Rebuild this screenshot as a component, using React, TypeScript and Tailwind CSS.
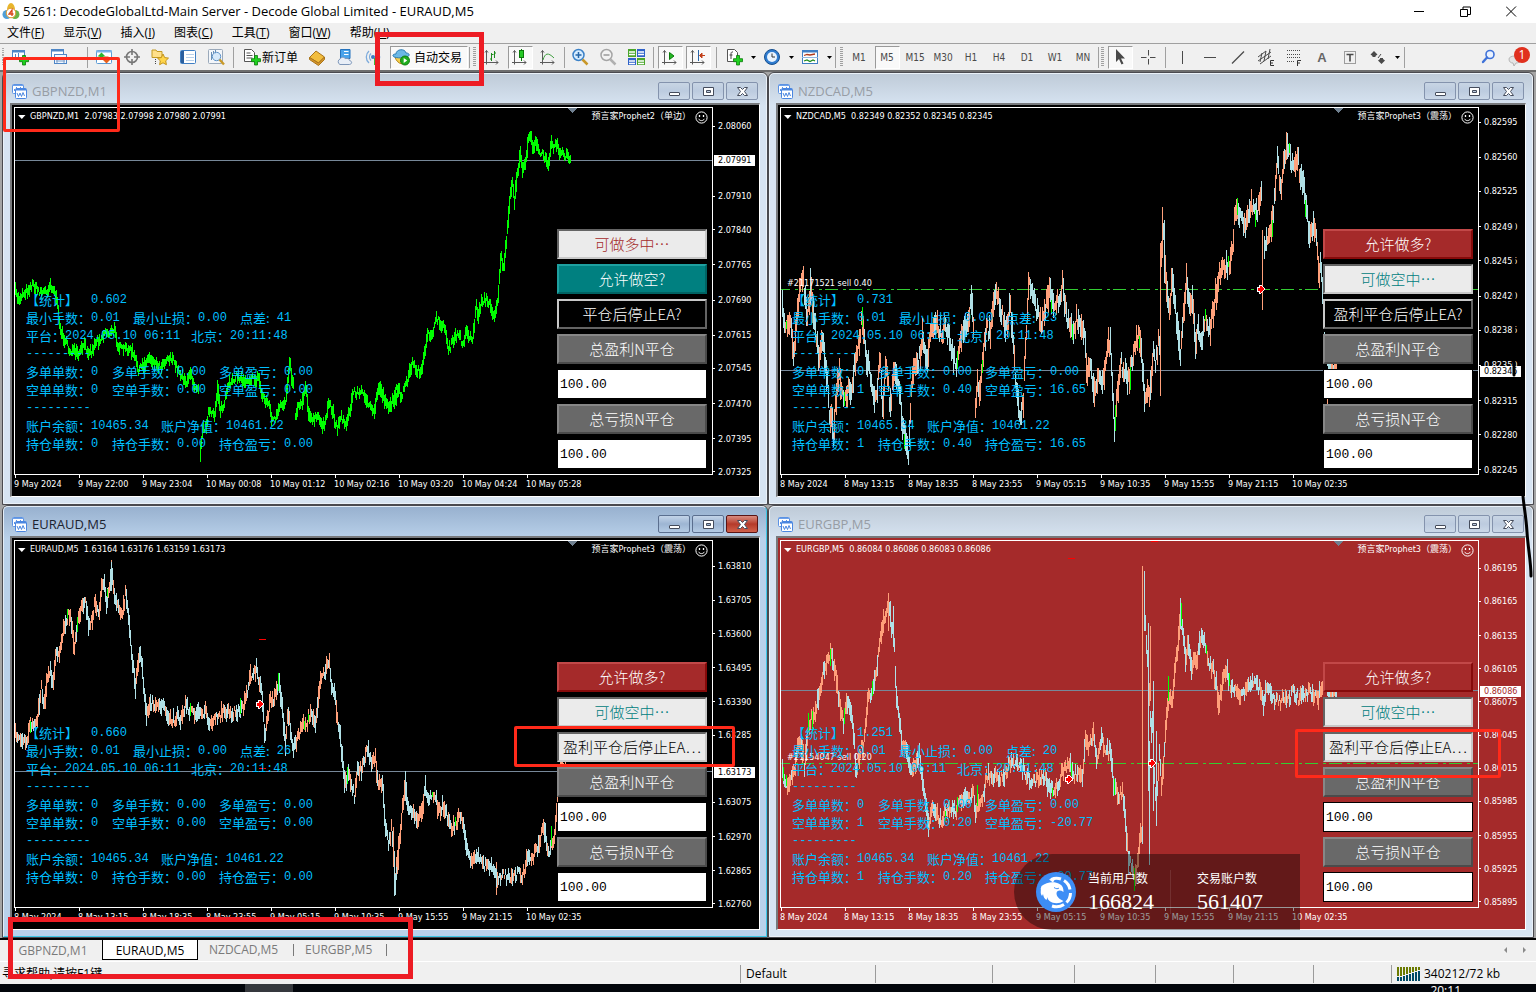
import React from "react";

const UI = "font-['Open_Sans','Noto_Sans_CJK_SC',sans-serif]";
const CHART = "font-['DejaVu_Sans_Condensed','DejaVu_Sans','Noto_Sans_CJK_SC',sans-serif]";
const CJK = "font-['Noto_Sans_CJK_SC',sans-serif]";
const MONO = "font-['Liberation_Mono','Noto_Sans_CJK_SC',monospace]";

/* ---------- price series ---------- */

type Segment = { dx: number; dy: number; points: string };
type Spike = [number, number, number, number];
type Tag = [string, number];
type Btn = { text: string; kind: "red" | "teal" | "black" | "grey" | "lightRed" | "lightTeal" | "lightBlack" };

type ChartData = {
  symbol: string;
  active?: boolean;
  quotes: string;
  expert: string;
  background: "black" | "red";
  colours: "lime" | "dual";
  spread: number;
  segments: Segment[];
  spikes?: Spike[];
  prices: Tag[];
  current: Tag;
  times: string[];
  order?: { text: string; y: number };
  arrows?: [number, number][];
  marks?: [number, number][];
  stats: { ratio: string; spread: string; count: string; lots: string; profit: string };
  buttons: Btn[];
};

const GBPNZD: Segment[] = [
  { dx: -15, dy: 162, points: "45,66 55,90 65,72 80,62 98,42 112,60 126,66 140,64 150,42 160,60 168,90 175,130 182,190 195,210 205,240 220,245 235,258 250,225 262,240 275,246 285,215 300,205 315,185 330,190 345,180 352,225 365,240 380,235 395,246 405,270 415,300 430,285 447,262 465,280 480,288 497,268 512,262 525,285 540,310 552,325 560,345 572,300 580,345 596,350" },
  { dx: -15, dy: 162, points: "600,540 606,480 616,470 625,425 642,440 652,350 660,420 670,410 680,365 692,330 710,320 730,330 748,325 765,330 775,320 783,370 795,390 805,400 815,450 825,450 840,410 855,395 862,330 867,270 874,320 880,350" },
  { dx: -15, dy: 162, points: "883,440 895,405 905,395 916,345 924,420 935,455 950,440 965,465 978,450 986,395 998,430 1010,475 1020,440 1035,460 1048,430 1058,365 1075,370 1090,365 1105,410 1120,430 1135,350 1150,380 1165,410 1180,395 1198,360" },
  { dx: 365, dy: -8, points: "0,865 12,900 28,925 47,870 62,890 78,850 95,790 112,815 125,810 135,750 142,705 155,700 168,660 182,670 195,690 205,750 218,725 232,700 248,730 258,695 276,720 288,620 295,650 303,600 318,600 330,620 342,645 352,600 362,470 370,500 378,430 388,300 397,250 402,300 410,230 420,160 428,215 436,190 443,110 450,105 458,140 466,130 478,160 490,165 498,190 506,180 513,115 520,140 530,130 540,160 552,165 560,165 570,185" },
];

const NZDCAD: Segment[] = [
  { dx: -13, dy: -8, points: "40,620 50,670 66,650 75,760 85,660 95,540 103,530 118,650 127,560 135,650 145,730 152,770 160,700 170,780 178,850 185,980 190,930 195,1000 205,880 212,800 220,880 228,900 240,860 250,880 260,780 270,730 283,650 295,780 305,820 318,890 328,850 335,780 343,930 352,780 365,920 380,800 392,850 400,960 410,1000 420,1070 430,860 440,800 455,770 462,700 475,780 485,720 500,670 515,700 530,680 545,720 555,780 568,790 580,700 595,680 603,640 607,570 612,640 616,720" },
  { dx: -13, dy: -8, points: "620,940 627,860 632,900 640,800 655,680 665,700 677,580 690,600 700,640 715,690 725,620 735,740 745,880 757,960 765,900 772,720 780,560 790,560 805,640 820,680 835,610 843,560 855,630 870,600 882,550 895,650 905,680 915,700 925,650 940,680 950,690 955,820 965,780 978,890 990,810 1003,860 1015,760 1025,720 1037,980 1050,860 1057,780 1065,810 1080,840 1090,790 1100,740 1112,700 1120,780 1130,910 1140,880 1146,880" },
  { dx: 369, dy: -8, points: "0,870 8,750 15,790 25,720 30,790 33,480 38,380 45,500 50,570 58,620 65,530 72,600 80,680 90,760 100,640 108,540 115,600 125,600 135,720 145,690 155,720 165,660 178,690 190,620 200,560 210,510 220,500 235,500 248,440 253,350 262,330 275,350 285,380 295,340 303,310 315,350 325,320 333,280" },
  { dx: 369, dy: -8, points: "340,430 345,440 352,420 360,400 370,320 380,170 390,270 400,200 410,130 420,170 430,220 440,160 450,230 460,260 470,330 478,430 487,370 495,380 505,520 512,500 518,600 524,760 540,800 560,800" },
];

const EURAUD: Segment[] = [
  { dx: -15, dy: -36, points: "45,690 55,690 70,700 78,710 88,660 98,650 108,660 115,600 123,550 132,600 140,530 150,500 158,530 165,450 178,440 188,380 200,330 212,340 222,430 235,330 245,300 255,290 265,360 275,340 285,290 295,320 303,260 311,220 318,290 325,250 333,190 340,270 352,290 362,340 375,270 385,330 392,420 398,490 405,540 412,480 418,440 425,480 430,560 438,640 450,590 462,600 475,590 490,610 502,640 515,650 530,630 540,650 555,600 570,620 585,630 600,620 615,620 627,670 640,640 655,640 670,610 690,630 705,620 720,620 730,610 740,560 750,510 760,510 767,490 780,540 788,600 793,700 800,650 810,590 820,590 828,560 836,530 845,600 855,730 862,620 870,670 880,730 890,700 905,660 918,660 930,620 945,650 955,560 962,510 975,500 987,460 993,540 1003,570 1012,650 1022,720 1033,850 1042,800 1050,830 1062,870 1070,800 1085,790 1100,730 1115,780 1125,760 1133,850 1145,830 1155,960 1165,1020 1173,970 1185,1130 1195,1050" },
  { dx: 375, dy: -36, points: "8,960 14,1130 20,1050 30,990 37,900 45,840 55,920 65,920 80,940 92,930 105,850 115,880 125,880 135,870 145,920 160,900 170,930 182,970 195,960 207,930 220,970 232,1040 245,1070 262,1050 275,1080 290,1080 305,1090 320,1120 330,1110 345,1110 357,1125 370,1110 385,1105 397,1115 410,1060 425,1060 440,1030 450,1000 460,960 470,1030 480,1040 490,1000 497,940 502,860 510,790 525,780" },
];

const EURGBP: Segment[] = [
  { dx: -13, dy: -36, points: "40,800 55,835 70,810 80,780 90,710 98,700 108,780 118,680 128,640 140,640 150,570 165,500 178,460 190,440 203,520 215,600 225,660 235,580 248,620 257,700 263,800 275,740 285,720 297,590 310,560 322,500 333,430 345,340 352,330 362,290 370,370 378,420 383,560 390,610 400,720 412,720 422,780 430,810 442,780 452,740 462,820 475,910 482,970 492,910 505,930 515,950 530,920 547,910 560,920 575,890 590,880 605,870 615,870 622,940 632,890 645,880 655,810 670,810 690,820 710,810 725,780 740,770 755,780 770,800 785,830 800,830 815,825 830,820 845,850 855,865 868,840 880,800 895,780 905,780 915,810 930,800 943,810 950,690 960,720 975,690 985,760 1000,700 1010,740 1025,740 1035,830 1050,880 1062,850 1070,940 1080,1060 1090,1080 1100,1130 1110,1050 1118,980 1122,1000" },
  { dx: -13, dy: -36, points: "1127,300 1130,340 1136,470 1141,480 1145,640 1150,700" },
  { dx: 365, dy: -36, points: "18,640 22,780 30,930 38,740 46,850 55,720 62,600 70,560 78,590 85,500 95,420 103,320 110,390 118,470 125,410 135,480 145,470 155,450 165,380 175,420 185,470 200,490 210,540 218,600 228,530 240,490 250,540 265,560 280,570 300,550 320,530 340,550 352,600 360,550 372,560 385,580 400,590 415,580 430,580 440,560 455,580 470,570 490,560 505,570 515,580 525,550 532,530 550,560 570,570" },
];

const M5_TIMES = ["8 May 2024", "8 May 13:15", "8 May 18:35", "8 May 23:55", "9 May 05:15", "9 May 10:35", "9 May 15:55", "9 May 21:15", "10 May 02:35"];
const GREYS: Btn[] = [
  { text: "总盈利N平仓", kind: "grey" },
  { text: "总亏损N平仓", kind: "grey" },
];

const CHARTS: ChartData[] = [
  {
    symbol: "GBPNZD,M1", quotes: "2.07983 2.07998 2.07980 2.07991", expert: "预言家Prophet2（单边）",
    background: "black", colours: "lime", spread: 10, segments: GBPNZD,
    prices: [["2.08060", 19], ["2.07910", 89], ["2.07840", 122], ["2.07765", 157], ["2.07690", 192], ["2.07615", 227], ["2.07545", 260], ["2.07470", 295], ["2.07395", 330], ["2.07325", 363]],
    current: ["2.07991", 52],
    times: ["9 May 2024", "9 May 22:00", "9 May 23:04", "10 May 00:08", "10 May 01:12", "10 May 02:16", "10 May 03:20", "10 May 04:24", "10 May 05:28"],
    stats: { ratio: "0.602", spread: "41", count: "0", lots: "0.00", profit: "0.00" },
    buttons: [{ text: "可做多中…", kind: "lightRed" }, { text: "允许做空?", kind: "teal" }, { text: "平仓后停止EA?", kind: "black" }, ...GREYS],
  },
  {
    symbol: "NZDCAD,M5", quotes: "0.82349 0.82352 0.82345 0.82345", expert: "预言家Prophet3（震荡）",
    background: "black", colours: "dual", spread: 19, segments: NZDCAD,
    spikes: [[379, 135, 288, 0], [381, 99, 140, 0], [383, 112, 175, 1], [481, 122, 202, 0], [29, 160, 195, 1], [508, 35, 45, 2], [456, 90, 107, 2], [524, 92, 109, 2], [491, 112, 129, 2], [474, 102, 119, 2], [81, 199, 219, 2], [349, 259, 282, 2], [270, 192, 205, 2], [201, 252, 265, 2], [123, 326, 341, 2], [358, 228, 240, 2], [5, 213, 221, 2], [549, 257, 261, 0], [552, 257, 261, 1], [546, 291, 296, 0]],
    prices: [["0.82595", 15], ["0.82560", 50], ["0.82525", 84], ["0.82490", 119], ["0.82455", 153], ["0.82420", 188], ["0.82385", 222], ["0.82350", 257], ["0.82315", 292], ["0.82280", 326], ["0.82245", 361]],
    current: ["0.82345", 262], times: M5_TIMES,
    order: { text: "#21171521 sell 0.40", y: 181 }, arrows: [[479, 181]],
    stats: { ratio: "0.731", spread: "23", count: "1", lots: "0.40", profit: "16.65" },
    buttons: [{ text: "允许做多?", kind: "red" }, { text: "可做空中…", kind: "lightTeal" }, { text: "盈利平仓后停止EA?", kind: "black" }, ...GREYS],
  },
  {
    symbol: "EURAUD,M5", active: true, quotes: "1.63164 1.63176 1.63159 1.63173", expert: "预言家Prophet3（震荡）",
    background: "black", colours: "dual", spread: 13, segments: EURAUD,
    spikes: [[96, 21, 50, 1], [92, 48, 56, 2], [263, 132, 150, 2], [225, 157, 173, 2], [52, 68, 78, 2], [15, 180, 192, 2], [293, 173, 181, 2], [536, 285, 305, 2], [379, 310, 355, 1], [481, 321, 354, 0], [390, 230, 260, 1]],
    prices: [["1.63810", 26], ["1.63705", 60], ["1.63600", 93], ["1.63495", 127], ["1.63390", 161], ["1.63285", 194], ["1.63075", 261], ["1.62970", 295], ["1.62865", 329], ["1.62760", 362]],
    current: ["1.63173", 230], times: M5_TIMES,
    arrows: [[244, 163]], marks: [[244, 98], [244, 227]],
    stats: { ratio: "0.660", spread: "26", count: "0", lots: "0.00", profit: "0.00" },
    buttons: [{ text: "允许做多?", kind: "red" }, { text: "可做空中…", kind: "lightTeal" }, { text: "盈利平仓后停止EA…", kind: "lightBlack" }, ...GREYS],
  },
  {
    symbol: "EURGBP,M5", quotes: "0.86084 0.86086 0.86083 0.86086", expert: "预言家Prophet3（震荡）",
    background: "red", colours: "dual", spread: 14, segments: EURGBP,
    spikes: [[361, 25, 300, 0], [363, 30, 90, 1], [367, 82, 250, 1], [369, 85, 160, 0], [368, 200, 324, 1], [372, 140, 270, 1], [375, 190, 285, 1], [399, 57, 80, 1], [107, 52, 90, 0], [112, 65, 105, 1], [49, 108, 125, 2], [91, 140, 155, 2], [27, 172, 190, 2], [31, 170, 192, 2], [2, 226, 240, 2], [5, 234, 245, 2], [164, 270, 280, 2], [196, 244, 265, 2], [387, 135, 160, 2], [400, 62, 85, 2], [353, 327, 350, 2], [271, 247, 256, 2]],
    prices: [["0.86195", 28], ["0.86165", 61], ["0.86135", 95], ["0.86105", 128], ["0.86075", 161], ["0.86045", 194], ["0.86015", 227], ["0.85985", 260], ["0.85955", 294], ["0.85925", 327], ["0.85895", 360]],
    current: ["0.86086", 149], times: M5_TIMES,
    order: { text: "#21154047 sell 0.20", y: 222 }, arrows: [[370, 222], [287, 238]], marks: [[287, 17], [370, 0]],
    stats: { ratio: "1.251", spread: "20", count: "1", lots: "0.20", profit: "-20.77" },
    buttons: [{ text: "允许做多?", kind: "red" }, { text: "可做空中…", kind: "lightTeal" }, { text: "盈利平仓后停止EA…", kind: "lightBlack" }, ...GREYS],
  },
];

const PLOT_W = 697;
const PLOT_H = 366;

function buildPaths(chart: ChartData): string[] {
  const paths = ["", "", ""];
  let seed = 7;
  const rand = () => {
    seed = (seed * 16807) % 2147483647;
    return seed / 2147483647;
  };
  let last = 0;
  for (const seg of chart.segments) {
    const pts = seg.points.split(" ").map((p) => {
      const [x, y] = p.split(",").map(Number);
      return [x / 3 + seg.dx, y / 3 + seg.dy];
    });
    let i = 0;
    for (let x = Math.ceil(pts[0][0]); x <= pts[pts.length - 1][0]; x++) {
      while (i < pts.length - 2 && pts[i + 1][0] < x) i++;
      const [x0, y0] = pts[i];
      const [x1, y1] = pts[i + 1];
      const slope = (y1 - y0) / (x1 - x0);
      const mid = y0 + slope * (x - x0) + (rand() - 0.5) * chart.spread * 0.7;
      const half = (chart.spread * (0.3 + rand() * 0.95)) / 2 + Math.min(Math.abs(slope), 10) * 0.45;
      const top = Math.round(mid - half);
      const bottom = Math.round(mid + half);
      let c = 2;
      if (chart.colours === "dual") {
        const lean = rand() * 2 - 1 + Math.max(-0.6, Math.min(0.6, slope * 0.35)) + (last === 1 ? 0.15 : -0.15);
        c = lean > 0 ? 1 : 0;
        last = c;
        if (rand() < 0.008) c = 2;
      }
      paths[c] += `M${x}.5 ${top}V${bottom}`;
    }
  }
  for (const [x, a, b, c] of chart.spikes ?? []) paths[c] += `M${x}.5 ${a}V${b}`;
  return paths;
}

function Plot({ chart }: { chart: ChartData }) {
  const [up, down, lime] = buildPaths(chart);
  return (
    <svg className="absolute inset-0 h-full w-full" viewBox={`0 0 ${PLOT_W} ${PLOT_H}`} preserveAspectRatio="none" fill="none" shapeRendering="crispEdges" aria-hidden="true">
      <path d={`M0 ${chart.current[1]}.5H${PLOT_W}`} stroke="#778899" />
      {chart.order && <path d={`M0 ${chart.order.y}.5H${PLOT_W}`} stroke="#32cd32" strokeDasharray="13 5 3 3" strokeDashoffset="4" />}
      <path d={up} stroke="#ffa07a" />
      <path d={down} stroke="#b0e0e6" />
      <path d={lime} stroke="#00ff00" />
      {chart.marks?.map(([x, y]) => <path key={`${x}-${y}`} d={`M${x} ${y}.5h7`} stroke="#ff0000" />)}
      {chart.arrows?.map(([x, y]) => (
        <path key={`${x}-${y}`} d={`M${x - 3} ${y - 2}h2v-2h2l4 4l-4 4h-2v-2h-2z`} fill="#ff0000" stroke="#fff" />
      ))}
      <path d="M552 0h10l-5 5z" fill="#708090" />
    </svg>
  );
}

/* ---------- chart contents ---------- */

function Item({ label, value, w }: { label: string; value: string; w: string }) {
  return (
    <>
      <span className={`${CJK} text-[13px]`}>{label}</span>
      <span className={`${w} ${MONO} text-xs whitespace-pre`}>{value}</span>
    </>
  );
}

function Stats({ s }: { s: ChartData["stats"] }) {
  const row = "flex h-[18px] items-center whitespace-nowrap";
  return (
    <div className="absolute bottom-[21px] left-[11px] leading-[18px] text-[#00bfff]">
      <div className={row}>
        <span className={`${CJK} w-[65px] text-[13px]`}>【统计】</span>
        <span className={`${MONO} text-xs`}>{s.ratio}</span>
      </div>
      <div className={row}>
        <Item label="最小手数：" value="0.01" w="w-[42px]" />
        <Item label="最小止损：" value="0.00" w="w-[42px]" />
        <Item label="点差:" value={` ${s.spread}`} w="w-[42px]" />
      </div>
      <div className={row}>
        <Item label="平台：" value="2024.05.10 06:11" w="w-[126px]" />
        <Item label="北京：" value="20:11:48" w="w-[70px]" />
      </div>
      <div className={`${row} ${MONO} text-xs`}>---------</div>
      <div className={row}>
        <Item label="多单单数：" value="0" w="w-[21px]" />
        <Item label="多单手数：" value="0.00" w="w-[42px]" />
        <Item label="多单盈亏：" value="0.00" w="w-[42px]" />
      </div>
      <div className={row}>
        <Item label="空单单数：" value={s.count} w="w-[21px]" />
        <Item label="空单手数：" value={s.lots} w="w-[42px]" />
        <Item label="空单盈亏：" value={s.profit} w="w-[42px]" />
      </div>
      <div className={`${row} ${MONO} text-xs`}>---------</div>
      <div className={row}>
        <Item label="账户余额：" value="10465.34" w="w-[70px]" />
        <Item label="账户净值：" value="10461.22" w="w-[70px]" />
      </div>
      <div className={row}>
        <Item label="持仓单数：" value={s.count} w="w-[21px]" />
        <Item label="持仓手数：" value={s.lots} w="w-[42px]" />
        <Item label="持仓盈亏：" value={s.profit} w="w-[42px]" />
      </div>
    </div>
  );
}

const BTN_STYLE: Record<Btn["kind"], string> = {
  red: "border-t-[#c24848] border-l-[#c24848] border-r-[#860a0a] border-b-[#860a0a] bg-[#a52a2a] text-white",
  teal: "border-t-[#1ea0a0] border-l-[#1ea0a0] border-r-[#006464] border-b-[#006464] bg-[#008080] text-white",
  black: "border-t-[#c8c8c8] border-l-[#c8c8c8] border-r-[#646464] border-b-[#646464] bg-black text-white",
  grey: "border-t-[#878787] border-l-[#878787] border-r-[#4b4b4b] border-b-[#4b4b4b] bg-[#696969] text-white",
  lightRed: "border-t-[#646464] border-l-[#646464] border-r-[#c8c8c8] border-b-[#c8c8c8] bg-[#ebebeb] text-[#a52a2a]",
  lightTeal: "border-t-[#646464] border-l-[#646464] border-r-[#c8c8c8] border-b-[#c8c8c8] bg-[#ebebeb] text-[#008080]",
  lightBlack: "border-t-[#646464] border-l-[#646464] border-r-[#c8c8c8] border-b-[#c8c8c8] bg-[#ebebeb] text-black",
};

function Panel({ chart }: { chart: ChartData }) {
  const input = (label: string) => (
    <input aria-label={label} defaultValue="100.00" className={`h-[30px] w-full border border-black bg-white px-[2px] text-[13px] text-black ${MONO}`} />
  );
  return (
    <div className="absolute right-[5px] bottom-[5px] flex w-[150px] flex-col gap-[5px]">
      {chart.buttons.map((b) => (
        <React.Fragment key={b.text}>
          <button className={`h-[30px] border-2 text-[15px] leading-[26px] font-light whitespace-nowrap ${CJK} ${BTN_STYLE[b.kind]}`}>{b.text}</button>
          {b.kind === "grey" && input(b.text)}
        </React.Fragment>
      ))}
    </div>
  );
}

function Smiley() {
  return (
    <svg width="13" height="13" viewBox="0 0 13 13" fill="none" stroke="#fff" aria-hidden="true">
      <circle cx="6.5" cy="6.5" r="5.6" />
      <path d="M4.5 4v2M8.5 4v2" strokeWidth="1.3" />
      <path d="M3.5 7.8c1.4 2.4 4.6 2.4 6 0" />
    </svg>
  );
}

function ChartIcon() {
  return (
    <svg width="15" height="15" viewBox="0 0 15 15" fill="none" aria-hidden="true">
      <rect x="0.5" y="0.5" width="11" height="9" rx="1" fill="#fff" stroke="#5b92e4" />
      <path d="M1 1.5h10" stroke="#6ea0e8" />
      <path d="M2.500 7V5M4.500 5V3M6.500 4v2M8.500 3v2" stroke="#5b92e4" />
      <rect x="3.500" y="4.500" width="11" height="10" rx="1" fill="#fff" stroke="#4a86e0" />
      <path d="M4 5.500h10" stroke="#4a86e0" strokeWidth="2" />
      <path d="M5 9l1.500 3.500L8 9l1.500 3.500L11 8.500l1.500 3.500" stroke="#4a86e0" />
    </svg>
  );
}

function WinButton({ kind, active }: { kind: "min" | "max" | "close"; active?: boolean }) {
  const look =
    active && kind === "close"
      ? "border-[#5a1414] bg-linear-to-b from-[#d98b80] via-[#b53a2a] to-[#d0604a]"
      : active
        ? "border-[#5b6f8f] bg-linear-to-b from-[#c3d4e8] via-[#9db5d3] to-[#b4cbe4]"
        : "border-[#8493ad] bg-linear-to-b from-[#c8d5e4] via-[#bccbdf] to-[#cbd8e8]";
  return (
    <button aria-label={kind} className={`flex h-[18px] w-[32px] items-center justify-center rounded-xs border ${look}`}>
      <svg width="13" height="11" viewBox="0 0 13 11" fill="#fff" stroke="#454c5c" aria-hidden="true">
        {kind === "min" && <rect x="1.5" y="6.5" width="10" height="3" rx="0.5" />}
        {kind === "max" && <path fillRule="evenodd" d="M1.5 1.5h10v8h-10zM4.5 4.5h4v2h-4z" />}
        {kind === "close" && <path d="M1.5 1.5h3l2 2 2-2h3L8.500 5.500l3 4h-3l-2-2-2 2h-3l3-4z" />}
      </svg>
    </button>
  );
}

function ChartWindow({ chart }: { chart: ChartData }) {
  const bg = chart.background === "red" ? "bg-[#a52a2a]" : "bg-black";
  const frame = chart.active
    ? "bg-linear-to-b from-[#98b1cf] to-[#b9d1ea] to-[32px] border-t-[#e2ecf6] border-l-[#e2ecf6] border-r-[#3fc8e8] border-b-[#3fc8e8]"
    : "bg-linear-to-b from-[#bfcbd8] to-[#d7e4f2] to-[32px] border-[#eaf1f8]";
  return (
    <section className="flex min-h-0 min-w-0 flex-col rounded-t-md border border-[#4a4a4f]">
      <div className={`flex min-h-0 flex-1 flex-col rounded-t-[5px] border px-[6px] pb-[6px] ${frame}`}>
        <header className="flex h-[29px] shrink-0 items-center gap-[3px] pt-[5px] pl-[2px]">
          <ChartIcon />
          <h2 className={`flex-1 pl-[2px] text-[13px] leading-[18px] ${UI} ${chart.active ? "text-[#1c2430]" : "text-[#979da5]"}`}>{chart.symbol}</h2>
          <div className="flex gap-[2px] pr-[2px]">
            <WinButton kind="min" active={chart.active} />
            <WinButton kind="max" active={chart.active} />
            <WinButton kind="close" active={chart.active} />
          </div>
        </header>
        <div className={`grid min-h-0 flex-1 grid-cols-[1fr_46px] grid-rows-[1fr_21px] border-t-2 border-r border-b border-l-2 border-t-[#77797c] border-r-white border-b-white border-l-[#77797c] pt-[2px] pl-[2px] text-[9px] text-white ${bg} ${CHART}`}>
          <div className="relative border border-white">
            <Plot chart={chart} />
            {chart.order && (
              <span className="absolute left-[6px] leading-3 whitespace-nowrap" style={{ top: `calc(${(chart.order.y / PLOT_H) * 100}% - 12px)` }}>{chart.order.text}</span>
            )}
            <Stats s={chart.stats} />
            <div className="absolute inset-x-0 top-0 flex h-[18px] items-center pr-[4px] pl-[3px]">
              <svg width="8" height="5" viewBox="0 0 8 5" fill="#fff" aria-hidden="true"><path d="M0 0h7.500L3.800 4z" /></svg>
              <span className="ml-[4px] flex-1 whitespace-pre">{`${chart.symbol}  ${chart.quotes}`}</span>
              <span className="mr-[4px]">{chart.expert}</span>
              <Smiley />
            </div>
            <Panel chart={chart} />
          </div>
          <ul className="relative">
            {chart.prices.map(([text, y]) => (
              <li key={text} className="absolute left-0 flex h-3 items-center gap-[3px] leading-3" style={{ top: `calc(${(y / PLOT_H) * 100}% - 6px)` }}>
                <i className="h-px w-[2px] bg-white" />{text}
              </li>
            ))}
            <li className={`absolute left-[1px] h-[11px] w-[41px] bg-white pl-[4px] leading-[11px] ${chart.background === "red" ? "text-[#a52a2a]" : "text-black"}`} style={{ top: `calc(${(chart.current[1] / PLOT_H) * 100}% - 4px)` }}>{chart.current[0]}</li>
          </ul>
          <ol className="flex">
            {chart.times.map((t) => (
              <li key={t} className="w-[64px] whitespace-nowrap"><i className="ml-[1px] block h-[3px] w-px bg-white" /><span className="block leading-3">{t}</span></li>
            ))}
          </ol>
        </div>
      </div>
    </section>
  );
}

/* ---------- toolbar ---------- */

function Sep({ w = "w-[6px]" }: { w?: string }) {
  return <span className={`flex justify-center ${w}`}><i className="h-[21px] w-px bg-[#a0a0a0]" /></span>;
}
function Grip({ w = "w-[7px]" }: { w?: string }) {
  return (
    <svg className={w} height="20" viewBox="0 0 7 20" stroke="#a0a0a0" shapeRendering="crispEdges" aria-hidden="true">
      <path d="M2 .5h3M2 2.5h3M2 4.5h3M2 6.5h3M2 8.5h3M2 10.5h3M2 12.5h3M2 14.5h3M2 16.5h3M2 18.5h3" />
    </svg>
  );
}
function Caret({ w = "w-[10px]", tiny }: { w?: string; tiny?: boolean }) {
  return (
    <button aria-label="menu" className={`flex h-6 items-center justify-center ${w}`}>
      <svg width="5" height="3" viewBox="0 0 5 3" aria-hidden="true"><path d={tiny ? "M2 1h1v1h-1z" : "M0 0h5L2.5 3z"} /></svg>
    </button>
  );
}
const PRESSED = "border border-t-[#9a9a9a] border-l-[#9a9a9a] border-r-white border-b-white bg-[#f9f9f9]";

function Tool({ label, pressed, children }: { label: string; pressed?: boolean; children: React.ReactNode }) {
  return (
    <button aria-label={label} className="flex h-6 w-7 items-center justify-center">
      <span className={`flex h-[23px] w-[25px] items-center justify-center ${pressed ? PRESSED : ""}`}>
        <svg width="18" height="18" viewBox="0 0 18 18" fill="none" aria-hidden="true">{children}</svg>
      </span>
    </button>
  );
}

const plus = <path d="M11.500 7.500h3v3.200h3v3h-3v3.300h-3v-3.300h-3v-3h3z" fill="#1fd11f" stroke="#0a7a0a" strokeWidth="0.800" />;
const axes = (
  <>
    <path d="M3.500 2.500v14M1 14.500h14" stroke="#5a5a5a" />
    <path d="M2 4.500l1.500-2L5 4.500M13 12.500l2 2-2 2" stroke="#5a5a5a" />
  </>
);

function Toolbar() {
  return (
    <div role="toolbar" className="flex h-[29px] shrink-0 items-center overflow-hidden border-t border-b-2 border-t-[#a0a0a0] border-b-[#6d6d6d] bg-[#f0f0f0]">
      <Grip w="w-[6px]" />
      <Tool label="新图表"><rect x="1.500" y="2.500" width="12" height="9" fill="#fff" stroke="#4f86c6" /><path d="M1 3.500h13" stroke="#4f86c6" strokeWidth="2" /><path d="M4.500 6v4M7.500 5v4" stroke="#4f86c6" />{plus}</Tool>
      <Caret w="w-[11px]" tiny />
      <Tool label="配置"><rect x="1.500" y="1.500" width="12" height="9" fill="#fff" stroke="#4f86c6" /><path d="M1 2.500h13" stroke="#4f86c6" strokeWidth="2" /><rect x="4.500" y="6.500" width="12" height="9" fill="#eef5ff" stroke="#4f86c6" /><path d="M6 13h9M7 11v4M14 11v4" stroke="#7d9fc8" /></Tool>
      <Caret w="w-[11px]" tiny />
      <Sep />
      <Tool label="市场报价"><rect x="1.500" y="2.500" width="15" height="13" rx="1" fill="#fff" stroke="#5b9bd5" /><path d="M1 3.500h16" stroke="#7db2e6" strokeWidth="2" /><path d="M6.500 4.500l4 4H8.500v3h-4v-3h-2z" fill="#2db52d" /><path d="M11.500 15.500l-4-4h2v-3h4v3h2z" fill="#e8601c" /></Tool>
      <Tool label="数据窗口"><circle cx="9" cy="9" r="5.500" stroke="#777" strokeWidth="1.600" /><path d="M9 1v6M9 11v6M1 9h6M11 9h6" stroke="#777" strokeWidth="1.600" /></Tool>
      <Tool label="导航"><path d="M1 2h4l1 1.500h5v6H1z" fill="#ffe08a" stroke="#c29a25" /><path d="M4.500 11v6" stroke="#444" strokeDasharray="1 1" /><path d="M12 6l1.700 3.600 3.800.5-2.800 2.700.7 3.900-3.400-1.900-3.400 1.900.7-3.900L6.500 10.100l3.800-.5z" fill="#ffd54a" stroke="#c2931b" /></Tool>
      <Tool label="终端"><rect x="1.500" y="2.500" width="15" height="13" rx="1" fill="#fff" stroke="#3f7fc4" /><path d="M3.500 3v12" stroke="#2b5f9e" strokeWidth="3" /><path d="M7 6.500h8M7 9.500h8M7 12.500h8" stroke="#b8d0ea" /></Tool>
      <Tool label="策略测试"><rect x="1.500" y="1.500" width="14" height="14" rx="1" fill="#f3f6fa" stroke="#9aa9ba" /><path d="M4.500 4v8M6.500 3v3M8.500 2v4" stroke="#6b8fb5" /><circle cx="9.500" cy="8.500" r="4.200" fill="#cfe6fa" fillOpacity="0.8" stroke="#5f93c9" /><path d="M12.500 11.500l4.500 5" stroke="#c99a2a" strokeWidth="2.400" /></Tool>
      <Sep />
      <button className="flex h-6 w-[67px] items-center pl-[7px]">
        <svg width="18" height="18" viewBox="0 0 18 18" fill="none" aria-hidden="true"><path d="M1.500 1.500h7l3 3v9h-10z" fill="#fff" stroke="#555" /><path d="M3.500 5h4M3.500 7.500h6M3.500 10h6" stroke="#555" />{plus}</svg>
        <span className={`pl-[1px] text-xs whitespace-nowrap ${CJK}`}>新订单</span>
      </button>
      <Tool label="MetaEditor"><path d="M1.500 9.500L8 3l8.500 6-6 6z" fill="#f2bd3e" stroke="#a9741a" /><path d="M1.500 9.500v2l9 6 6-6V9l-6 6z" fill="#d7962a" stroke="#a9741a" /></Tool>
      <Tool label="市场"><path d="M4.500 1.500h9.500v9H4.500z" fill="#4aa3ea" stroke="#2573bd" /><path d="M8 3.500h4.500M8 6.500h4.500" stroke="#fff" /><path d="M4 16.500a3 3 0 010-5.500c1-2 4-2.300 5.300-.4 2.400-.8 4.300.6 4.400 2 2.700.6 2.500 3.600-.4 3.900z" fill="#e8eef7" stroke="#7c95b8" /></Tool>
      <Tool label="信号"><path d="M5 15a8 8 0 010-12M7 12.500a5 5 0 010-7M13 3a8 8 0 010 12M11 5.500a5 5 0 010 7" stroke="#7dabdc" strokeWidth="1.300" /><circle cx="9" cy="9" r="2" fill="#3a7bc2" /><path d="M10 10h3v7h-3z" fill="#3eb53e" /></Tool>
      <button aria-pressed="true" className={`ml-[3px] flex h-[23px] w-[78px] items-center pl-[1px] ${PRESSED}`}>
        <svg width="20" height="18" viewBox="0 0 20 18" fill="none" aria-hidden="true"><path d="M3 9c1 4 4 6.500 7 7l5-5V8z" fill="#f4cf4d" stroke="#b3861d" /><path d="M4 6c0-5 9-6 10-1 4 0 4 3 1 4-5 1.500-13 1-14-1-.5-1.500 1-2 3-2z" fill="#6bb8e6" stroke="#2f7fb4" /><circle cx="13" cy="12.500" r="4.500" fill="#1fae1f" stroke="#0f7f0f" /><path d="M11.700 10l3.500 2.500-3.500 2.500z" fill="#fff" /></svg>
        <span className={`pl-[2px] text-xs whitespace-nowrap ${CJK}`}>自动交易</span>
      </button>
      <Sep w="w-[3px]" />
      <Grip />
      <Tool label="柱状图">{axes}<path d="M8.500 5v8M7 11h1.500M8.500 6.500h2M11.500 3v7M11.500 5H13" stroke="#1e8c1e" /></Tool>
      <Tool label="阴阳烛" pressed>{axes}<path d="M10.500 1v12" stroke="#0a7a0a" /><rect x="8.500" y="2.500" width="4" height="7" fill="#25c825" stroke="#0a7a0a" /></Tool>
      <Tool label="折线图">{axes}<path d="M4 12c2-7 5-8 11-2" stroke="#3f9e3f" /></Tool>
      <Sep w="w-[4px]" />
      <Tool label="放大"><circle cx="7.500" cy="7" r="5.500" fill="#d6ecff" stroke="#3c82c8" strokeWidth="1.500" /><path d="M4.500 7h6M7.500 4v6" stroke="#2566a8" strokeWidth="1.500" /><path d="M11.500 11.500l5 5" stroke="#c9982a" strokeWidth="2.500" /></Tool>
      <Tool label="缩小"><circle cx="7.500" cy="7" r="5.500" fill="#f2f2f2" stroke="#a5a5a5" strokeWidth="1.500" /><path d="M4.500 7h6" stroke="#999" strokeWidth="1.500" /><path d="M11.500 11.500l5 5" stroke="#b0b0b0" strokeWidth="2.500" /></Tool>
      <Tool label="平铺"><path d="M1 1h8v8H1zM10 10h8v7h-8z" fill="#4aa52a" /><path d="M10 1h8v8h-8zM1 10h8v7H1z" fill="#2f62c9" /><path d="M2 4h6M11 4h6M2 6.500h6M11 6.500h6M2 13h6M11 13h6M2 15.500h6M11 15.500h6" stroke="#fff" strokeWidth="1.300" /></Tool>
      <Sep />
      <Tool label="自动滚动" pressed>{axes}<path d="M8.500 4.500l4.500 3.500-4.500 3.500z" fill="#25b825" stroke="#0a7a0a" /></Tool>
      <Tool label="图表平移" pressed>{axes}<path d="M9.500 2v11" stroke="#2a66a8" /><path d="M16 7.500h-4M13 5l-2.500 2.500L13 10z" stroke="#c2401a" fill="#c2401a" /></Tool>
      <Sep w="w-[8px]" />
      <Tool label="指标"><path d="M2.500 1.500h7l3 3v9h-10z" fill="#fff" stroke="#555" /><path d="M8 4c-2-.5-2 1-2 3v4M4.500 7h3" stroke="#444" />{plus}</Tool>
      <Caret />
      <Tool label="周期"><circle cx="9" cy="9" r="7.500" fill="#2f7cd0" stroke="#17508f" /><circle cx="9" cy="9" r="5" fill="#e9f4ff" /><path d="M9 5.500V9h3" stroke="#333" /></Tool>
      <Caret />
      <Tool label="模板"><rect x="1.500" y="2.500" width="15" height="13" fill="#fff" stroke="#3f7fc4" /><path d="M1 3.500h16" stroke="#3f7fc4" strokeWidth="2" /><path d="M1 9.500h16" stroke="#8fb8e0" /><path d="M3 7.500l3-1 3 .5 5-1" stroke="#b03a1a" strokeWidth="1.300" /><path d="M3 13l3-1 3 1.500 3-1.500 2 1" stroke="#1e8c1e" strokeWidth="1.300" /></Tool>
      <Caret />
      <Sep w="w-[3px]" />
      <Grip w="w-[8px]" />
      {["M1", "M5", "M15", "M30", "H1", "H4", "D1", "W1", "MN"].map((t) => (
        <button key={t} className={`flex h-6 w-7 items-center justify-center text-[10px] text-[#4a4a4a] ${CHART}`}>
          <span className={`flex h-[23px] w-[25px] items-center justify-center ${t === "M5" ? PRESSED : ""}`}>{t}</span>
        </button>
      ))}
      <Sep w="w-[2px]" />
      <Grip />
      <Tool label="光标" pressed><path d="M5 1v13l3-3 2.500 5.500 2-1L10 10.500h4z" fill="#4a4a4a" /></Tool>
      <Tool label="十字准线"><path d="M9.500 2v5.500M9.500 11v5.500M2 9.500h5.500M11 9.500h5.500" stroke="#4a4a4a" /></Tool>
      <Sep />
      <Tool label="垂直线"><path d="M9.500 3v13" stroke="#4a4a4a" /></Tool>
      <Tool label="水平线"><path d="M3 9.500h12" stroke="#4a4a4a" /></Tool>
      <Tool label="趋势线"><path d="M3 15.500L15 3.500" stroke="#4a4a4a" strokeWidth="1.200" /></Tool>
      <Tool label="通道"><path d="M1 13L14 4M1 9l8-6M3 16l11-8M5 5l-2 9M9 3L7 13M13 1l-2 10" stroke="#4a4a4a" /><path d="M17 12.500h-3.500v5H17M13.500 15H16" stroke="#333" /></Tool>
      <Tool label="斐波纳契"><path d="M2 2.500h13M2 6.500h13M2 9.500h13M2 13.500h8" stroke="#4a4a4a" strokeDasharray="1 1" /><path d="M16 12.500h-3.500V18M12.500 15H15" stroke="#333" /></Tool>
      <button aria-label="文字" className="flex h-6 w-7 items-center justify-center pt-[2px] font-['Liberation_Sans',sans-serif] text-[13px] font-bold text-[#666]">A</button>
      <Tool label="文字标签"><rect x="3.500" y="3.500" width="11" height="12" stroke="#4a4a4a" strokeDasharray="1 1" /><path d="M5.500 6.500h7M9 6.500v7" stroke="#4a4a4a" strokeWidth="1.600" /></Tool>
      <Tool label="箭头"><path d="M5 3l3.500 3.500L6.500 8v1h-3V8L1.500 6.500zM12.500 16L9 12.500 11 11v-1h3v1l2 1.500z" fill="#4a4a4a" /><path d="M9 10l3-4" stroke="#4a4a4a" /></Tool>
      <Caret />
      <Sep w="w-[4px]" />
      <div className="ml-auto flex pr-[5px]">
        <Tool label="搜索"><circle cx="10" cy="6.500" r="4" fill="#eaf2ff" stroke="#3f72d8" strokeWidth="1.600" /><path d="M7 9.500L3 14" stroke="#3f72d8" strokeWidth="2.400" strokeLinecap="round" /></Tool>
        <button aria-label="通知" className="relative flex h-6 w-7 items-center justify-center">
          <svg width="18" height="18" viewBox="0 0 18 18" aria-hidden="true"><path d="M1 11c0-4 12-4 12 0 0 3-3 4-5 4l-2 3-1-3c-2 0-4-1-4-4z" fill="#e4e4e4" stroke="#b5b5b5" /></svg>
          <span className={`absolute top-[2px] right-[1px] flex h-4 w-4 items-center justify-center rounded-full bg-[#e0301e] text-xs text-white ${UI}`}>1</span>
        </button>
      </div>
    </div>
  );
}

/* ---------- shell ---------- */

function TitleBar() {
  return (
    <header className="flex h-[23px] shrink-0 items-center bg-white pl-[2px]">
      <svg width="18" height="18" viewBox="0 0 18 18" fill="none" aria-hidden="true">
        <circle cx="5" cy="11.500" r="4.500" fill="#4f9fd8" /><circle cx="13" cy="11.500" r="4.500" fill="#67b346" /><path d="M9 0c2 0 4 3 4 7H5c0-4 2-7 4-7z" fill="#e8b52c" />
        <circle cx="9" cy="10" r="4.800" fill="#fff" stroke="#e09a2a" /><path d="M10 13V7l-3 4h4.500" stroke="#d9481c" strokeWidth="1.300" />
      </svg>
      <h1 className={`flex-1 pl-[3px] text-[13px] text-black ${UI}`}>5261: DecodeGlobalLtd-Main Server - Decode Global Limited - EURAUD,M5</h1>
      <div className="flex pr-[2px]">
        {["M0 5.500h10", "M0.500 3.500h7v7h-7zM3 3V1h7.500v7.500H8", "M0 0.500l10 10M10 0.500l-10 10"].map((d, i) => (
          <button key={d} aria-label={["最小化", "还原", "关闭"][i]} className="flex h-[22px] w-[46px] items-center justify-center">
            <svg width="11" height="11" viewBox="0 0 11 11" fill="none" stroke="#000" aria-hidden="true"><path d={d} /></svg>
          </button>
        ))}
      </div>
    </header>
  );
}

function MenuBar() {
  const items = [["文件", "F"], ["显示", "V"], ["插入", "I"], ["图表", "C"], ["工具", "T"], ["窗口", "W"], ["帮助", "H"]];
  return (
    <nav className="flex h-5 shrink-0 items-center gap-[19px] bg-[#f0f0f0] pl-[7px]">
      {items.map(([t, k]) => (
        <button key={k} className={`text-xs leading-5 font-normal whitespace-nowrap text-black ${UI}`}>{t}(<u>{k}</u>)</button>
      ))}
    </nav>
  );
}

function Tabs() {
  return (
    <div role="tablist" className={`flex h-6 shrink-0 items-start border-t-2 border-b border-t-black border-b-white bg-[#f0f0f0] pl-[6px] text-[12px] text-[#7a7a7a] ${UI}`}>
      <button role="tab" className="h-[20px] w-[96px] pr-[2px] leading-[22px]">GBPNZD,M1</button>
      <button role="tab" aria-selected="true" className="h-[20px] w-[96px] border-x border-b border-black bg-white leading-[21px] text-black">EURAUD,M5</button>
      <button role="tab" className="flex h-[20px] w-[96px] items-center justify-between leading-[22px]"><span className="pl-[11px]">NZDCAD,M5</span><i className="h-3 w-px bg-[#7a7a7a]" /></button>
      <button role="tab" className="flex h-[20px] w-[93px] items-center justify-between leading-[22px]"><span className="pl-[11px]">EURGBP,M5</span><i className="h-3 w-px bg-[#7a7a7a]" /></button>
      <svg className="mt-[6px] mr-[9px] ml-auto" width="24" height="8" viewBox="0 0 24 8" fill="#8a8a8a" aria-hidden="true"><path d="M4 1v6L1 4zM20 1v6l3-3z" /></svg>
    </div>
  );
}

function StatusBar() {
  const cell = "flex h-[18px] items-center border-l border-[#9b9b9b]";
  return (
    <footer className={`flex h-[22px] shrink-0 items-center bg-[#f0f0f0] pt-px text-[12px] text-black ${UI}`}>
      <span className="min-w-0 flex-1 pl-[2px] whitespace-nowrap">寻求帮助,请按F1键</span>
      <span className={`${cell} w-[135px] pl-[5px]`}>Default</span>
      <span className={`${cell} w-[117px]`} />
      <span className={`${cell} w-[82px]`} />
      <span className={`${cell} w-[81px]`} />
      <span className={`${cell} w-[78px]`} />
      <span className={`${cell} w-[80px]`} />
      <span className={`${cell} w-[78px]`} />
      <span className={`${cell} w-[145px] gap-[4px] pl-[5px]`}>
        <svg width="23" height="14" viewBox="0 0 23 14" shapeRendering="crispEdges" aria-hidden="true">
          {[9, 9, 8, 7, 6, 5, 4, 3].map((h, i) => (
            <g key={i}><rect x={i * 3} y="0" width="2" height={h} fill="#6b7a00" /><rect x={i * 3} y={h + 1} width="2" height={13 - h} fill="#004a66" /></g>
          ))}
        </svg>
        340212/72 kb
      </span>
    </footer>
  );
}

function Widget() {
  return (
    <aside className={`absolute right-[236px] bottom-[62px] flex h-[76px] w-[286px] items-center rounded-l-full bg-black/40 text-white ${CJK}`}>
      <svg className="ml-[22px]" width="40" height="40" viewBox="0 0 40 40" fill="none" aria-hidden="true">
        <circle cx="20" cy="20" r="20" fill="#3d8df5" />
        <path d="M15 7.500a13.500 13.500 0 0110-.5M28 8.500a13.500 13.500 0 016 9M34.500 21a13.500 13.500 0 01-4 9.500M28 32.500a14 14 0 01-12 1.500" stroke="#fff" strokeWidth="3" />
        <path d="M13 7.500l7-2-3 5z" fill="#fff" />
        <path d="M5.500 14c5-4 13-5 18-2 3 1.500 4 4 4 8-3-2-6-2-7 1 0 4 3 6 7 8-4 3-10 3-14 0-2-2-2-3-2-4l-1 3c-2-1-3-3-3.500-6l-1 2c-1.500-2-1.500-4-1-7l-.5.500z" fill="#fff" />
        <path d="M18 15.500c2 1.500 4 1.500 5 .500" stroke="#3d8df5" />
      </svg>
      <dl className="w-[95px] border-r border-white/10 pl-[12px]">
        <dt className="text-xs leading-4 whitespace-nowrap">当前用户数</dt>
        <dd className="pt-[4px] font-['Liberation_Serif',serif] text-[22px] leading-6">166824</dd>
      </dl>
      <dl className="pl-[26px]">
        <dt className="text-xs leading-4 whitespace-nowrap">交易账户数</dt>
        <dd className="pt-[4px] font-['Liberation_Serif',serif] text-[22px] leading-6">561407</dd>
      </dl>
    </aside>
  );
}

export default function App() {
  return (
    <div className="relative flex h-screen min-w-[1420px] flex-col overflow-hidden bg-[#f0f0f0]">
      <TitleBar />
      <MenuBar />
      <Toolbar />
      <main className="grid min-h-0 flex-1 grid-cols-2 grid-rows-2 bg-[#a5a5a5] px-[2px]">
        {CHARTS.map((c) => <ChartWindow key={c.symbol} chart={c} />)}
      </main>
      <Tabs />
      <StatusBar />
      <div className="flex h-[8px] shrink-0 justify-between overflow-hidden bg-[#03060c] pr-[75px] pl-[245px]">
        <i className="h-full w-[48px] bg-[#35383d]" />
        <time className={`text-[12px] leading-[14px] text-white ${UI}`}>20:11</time>
      </div>
      <Widget />
      <div className="pointer-events-none absolute top-[57px] left-[3px] h-[75px] w-[117px] rounded-xs border-3 border-[#ff2a1a]" />
      <div className="pointer-events-none absolute top-[32px] left-[375px] h-[54px] w-[109px] border-5 border-[#ed1c24]" />
      <div className="pointer-events-none absolute bottom-[13px] left-[8px] h-[62px] w-[405px] border-5 border-[#ed1c24]" />
      <div className="pointer-events-none absolute bottom-[225px] left-[514px] h-[41px] w-[221px] rounded-xs border-3 border-[#ff2a1a]" />
      <div className="pointer-events-none absolute right-[35px] bottom-[214px] h-[49px] w-[206px] rounded-xs border-3 border-[#ff2a1a]" />
      <svg className="pointer-events-none absolute top-[215px] right-0 h-[365px] w-[30px]" viewBox="0 0 30 365" fill="none" stroke="#000" strokeWidth="3" strokeLinecap="round" aria-hidden="true">
        <path d="M8 2v158M17 281c1 12 3 20 4 36s4 30 4 44" />
      </svg>
    </div>
  );
}
